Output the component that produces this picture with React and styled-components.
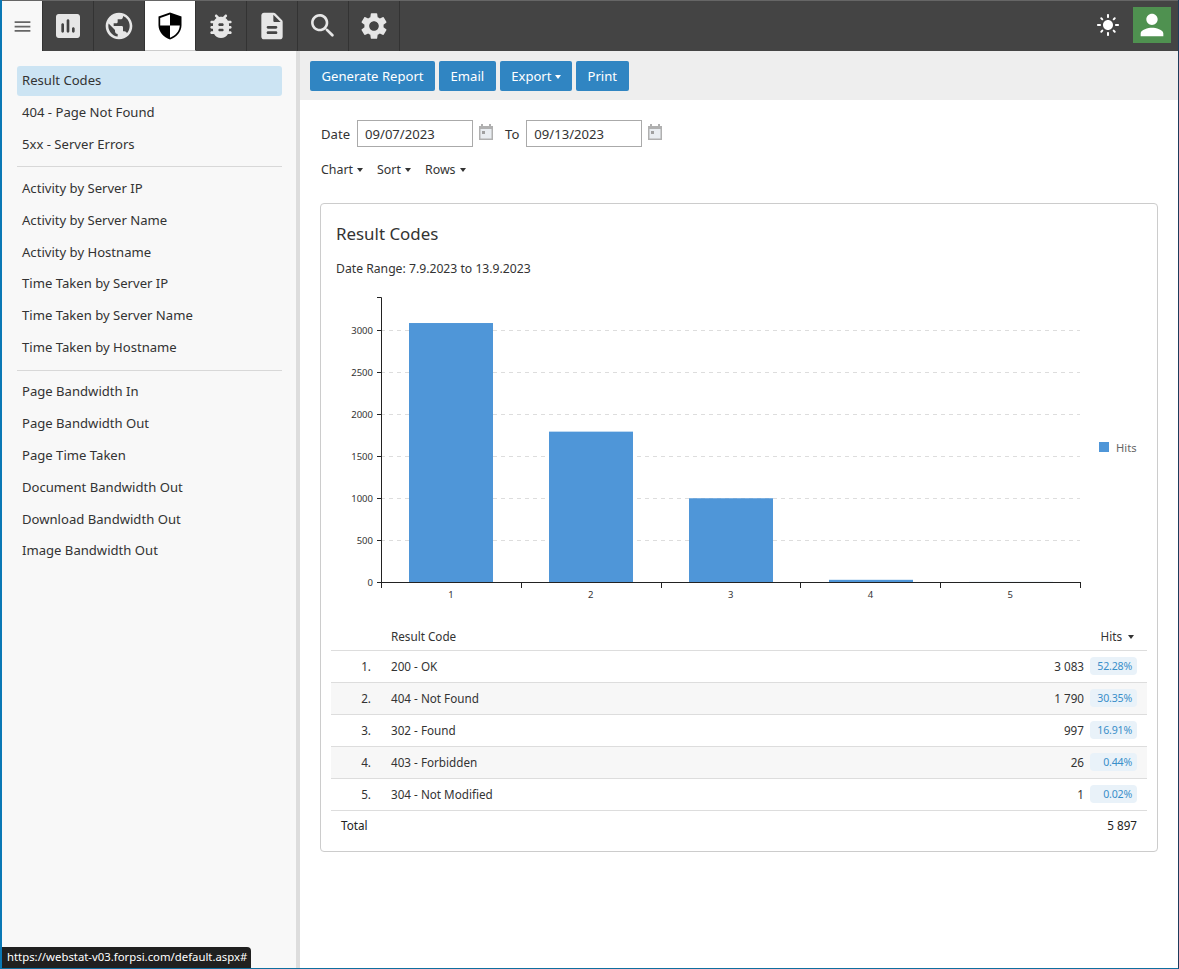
import React from "react";
import styled, { createGlobalStyle } from "styled-components";
import { MdMenu, MdPublic, MdSettings, MdPerson, MdLightMode } from "react-icons/md";

const GlobalStyle = createGlobalStyle`
  html, body {
    margin: 0;
    padding: 0;
    height: 100%;
    background: #fff;
    font-family: "Noto Sans", "Open Sans", "Liberation Sans", sans-serif;
    font-size: 13.1px;
    color: #333;
  }
  * { box-sizing: border-box; }
`;

const Page = styled.div`
  position: relative;
  width: 1179px;
  height: 969px;
  display: flex;
  flex-direction: column;
  overflow: hidden;
  border-left: 2px solid #0a78b5;
  border-right: 1px solid #1d3b5c;
  border-bottom: 1px solid #0f6f9f;
`;

const TopBar = styled.header`
  flex: none;
  height: 51px;
  display: flex;
  align-items: stretch;
  background: #444;
  border-top: 1px solid #666;
`;

const MenuTab = styled.div`
  width: 41px;
  background: #f8f8f8;
  color: #666;
  display: flex;
  align-items: center;
  justify-content: center;
  border-right: 1px solid #333;
`;

const Tab = styled.div`
  width: 51px;
  display: flex;
  align-items: center;
  justify-content: center;
  color: #e6e6e6;
  background: ${(p) => (p.$active ? "#fff" : "#444")};
  border-right: 1px solid #333;
  border-bottom: ${(p) => (p.$active ? "1px solid #ccc" : "none")};
`;

const TopRight = styled.div`
  margin-left: auto;
  display: flex;
  align-items: center;
  gap: 13px;
  padding-right: 7px;
  padding-bottom: 2px;
  color: #fff;
`;

const Avatar = styled.div`
  width: 38px;
  height: 36px;
  background: #4f9150;
  display: flex;
  align-items: center;
  justify-content: center;
  color: #fff;
`;

const Body = styled.div`
  flex: 1;
  display: flex;
  min-height: 0;
`;

const Sidebar = styled.nav`
  flex: none;
  width: 298px;
  background: #f8f8f8;
  border-right: 4px solid #ddd;
  padding: 15px 14px 0 15px;
`;

const NavItem = styled.div`
  height: 29.8px;
  margin-bottom: 2px;
  padding: 0 0 1.5px 5px;
  display: flex;
  align-items: center;
  border-radius: 3px;
  white-space: nowrap;
  background: ${(p) => (p.$active ? "#cce4f3" : "transparent")};
`;

const NavDivider = styled.hr`
  border: 0;
  border-top: 1px solid #d8d8d8;
  margin: 7px 0 6.5px;
`;

const Main = styled.main`
  flex: 1;
  min-width: 0;
  background: #fff;
`;

const Toolbar = styled.div`
  height: 49px;
  background: #eee;
  padding: 10px;
  display: flex;
  gap: 4px;
`;

const Button = styled.button`
  height: 30px;
  padding: 0 11.5px;
  border: 0;
  border-radius: 2px;
  background: #3085c2;
  color: #fff;
  font: inherit;
  white-space: nowrap;
`;

const Caret = styled.span`
  display: inline-block;
  margin-left: ${(p) => p.$gap || 4}px;
  vertical-align: 2px;
  border-top: 4px solid currentColor;
  border-left: 3.5px solid transparent;
  border-right: 3.5px solid transparent;
`;

const Content = styled.div`
  padding: 20px 20px 0;
`;

const DateRow = styled.div`
  display: flex;
  align-items: center;
  height: 27px;
  padding-left: 1px;
`;

const DateLabel = styled.label`
  margin-right: 7px;
`;

const ToLabel = styled(DateLabel)`
  margin-left: 12px;
`;

const DateInput = styled.input`
  width: 116px;
  height: 27px;
  padding: 0 7px;
  border: 1px solid #aaa;
  border-radius: 0;
  font: inherit;
  color: #333;
  outline: 0;
`;

const CalendarBtn = styled.span`
  display: flex;
  margin: -3px 0 0 6px;
  color: #aaa;
`;

const FilterRow = styled.div`
  display: flex;
  gap: 14px;
  margin-top: 12px;
  height: 20px;
  align-items: center;
  font-size: 12.4px;
  padding-left: 1px;
`;

const Card = styled.section`
  margin-top: 24px;
  width: 838px;
  height: 649px;
  border: 1px solid #ccc;
  border-radius: 4px;
  padding: 0 10px;
`;

const CardTitle = styled.h2`
  margin: 0;
  padding: 18px 0 0 5px;
  height: 52px;
  font-size: 16.9px;
  font-weight: 400;
  line-height: 24px;
`;

const RangeNote = styled.div`
  padding-left: 5px;
  height: 34px;
  line-height: 26px;
  font-size: 12.2px;
`;

const ChartSvg = styled.svg`
  display: block;
  width: 816px;
  height: 330px;
  font-family: "Noto Sans", "Open Sans", sans-serif;
`;

const Table = styled.table`
  width: 816px;
  border-collapse: collapse;
  table-layout: fixed;
  font-size: 11.7px;
`;

const Th = styled.th`
  height: 30px;
  padding: 2px ${(p) => p.$pr || 10}px 0 0;
  font-weight: 400;
  text-align: ${(p) => p.$align || "left"};
`;

const Row = styled.tr`
  height: 32px;
  background: ${(p) => (p.$shade ? "#f7f7f7" : "transparent")};
  border-top: 1px solid #ddd;
`;

const TotalRow = styled(Row)`
  color: #222;
  height: 30px;
`;

const Td = styled.td`
  padding: 0 ${(p) => p.$pr || 0}px 0 ${(p) => p.$pl || 0}px;
  text-align: ${(p) => p.$align || "left"};
  white-space: nowrap;
`;

const Hits = styled.div`
  display: flex;
  justify-content: flex-end;
  align-items: center;
  gap: 6px;
  padding-right: 10px;
`;

const Pct = styled.span`
  width: 47px;
  height: 18px;
  line-height: 18px;
  padding-right: 5px;
  text-align: right;
  border-radius: 4px;
  background: #e9f2f9;
  color: #3a8fc9;
  font-size: 10.6px;
  letter-spacing: -0.2px;
`;

const StatusTip = styled.div`
  position: absolute;
  left: 0;
  bottom: 0;
  width: 249px;
  height: 21px;
  padding: 0 5px;
  line-height: 20px;
  background: #202020;
  color: #fff;
  font-size: 11.35px;
  white-space: nowrap;
  border-top-right-radius: 4px;
`;

const groups = [
  ["Result Codes", "404 - Page Not Found", "5xx - Server Errors"],
  [
    "Activity by Server IP",
    "Activity by Server Name",
    "Activity by Hostname",
    "Time Taken by Server IP",
    "Time Taken by Server Name",
    "Time Taken by Hostname",
  ],
  [
    "Page Bandwidth In",
    "Page Bandwidth Out",
    "Page Time Taken",
    "Document Bandwidth Out",
    "Download Bandwidth Out",
    "Image Bandwidth Out",
  ],
];

const rows = [
  ["200 - OK", "3 083", "52.28%", 3083],
  ["404 - Not Found", "1 790", "30.35%", 1790],
  ["302 - Found", "997", "16.91%", 997],
  ["403 - Forbidden", "26", "0.44%", 26],
  ["304 - Not Modified", "1", "0.02%", 1],
];

const TabIcon = ({ d, size = 32 }) => (
  <svg width={size} height={size} viewBox="0 0 24 24" fill="currentColor">
    <path d={d} />
  </svg>
);

const ICONS = {
  report:
    "M19 3H5c-1.1 0-2 .9-2 2v14c0 1.1.9 2 2 2h14c1.1 0 2-.9 2-2V5c0-1.1-.9-2-2-2zM8 17c-.55 0-1-.45-1-1v-5c0-.55.45-1 1-1s1 .45 1 1v5c0 .55-.45 1-1 1zm4 0c-.55 0-1-.45-1-1V8c0-.55.45-1 1-1s1 .45 1 1v8c0 .55-.45 1-1 1zm4 0c-.55 0-1-.45-1-1v-2c0-.55.45-1 1-1s1 .45 1 1v2c0 .55-.45 1-1 1z",
  bug:
    "M19 8h-1.81c-.45-.78-1.07-1.45-1.82-1.96l.93-.93c.39-.39.39-1.02 0-1.41-.39-.39-1.02-.39-1.41 0l-1.47 1.47C12.96 5.06 12.49 5 12 5s-.96.06-1.41.17L9.11 3.7c-.39-.39-1.02-.39-1.41 0-.39.39-.39 1.02 0 1.41l.92.93C7.88 6.55 7.26 7.22 6.81 8H5c-.55 0-1 .45-1 1s.45 1 1 1h1.09c-.05.33-.09.66-.09 1v1H5c-.55 0-1 .45-1 1s.45 1 1 1h1v1c0 .34.04.67.09 1H5c-.55 0-1 .45-1 1s.45 1 1 1h1.81c1.04 1.79 2.97 3 5.19 3s4.15-1.21 5.19-3H19c.55 0 1-.45 1-1s-.45-1-1-1h-1.09c.05-.33.09-.66.09-1v-1h1c.55 0 1-.45 1-1s-.45-1-1-1h-1v-1c0-.34-.04-.67-.09-1H19c.55 0 1-.45 1-1s-.45-1-1-1zm-6 8h-2c-.55 0-1-.45-1-1s.45-1 1-1h2c.55 0 1 .45 1 1s-.45 1-1 1zm0-4h-2c-.55 0-1-.45-1-1s.45-1 1-1h2c.55 0 1 .45 1 1s-.45 1-1 1z",
  doc:
    "M14.59 2.59c-.38-.38-.89-.59-1.42-.59H6c-1.1 0-2 .9-2 2v16c0 1.1.89 2 1.99 2H18c1.1 0 2-.9 2-2V8.83c0-.53-.21-1.04-.59-1.41l-4.82-4.83zM15 18H9c-.55 0-1-.45-1-1s.45-1 1-1h6c.55 0 1 .45 1 1s-.45 1-1 1zm0-4H9c-.55 0-1-.45-1-1s.45-1 1-1h6c.55 0 1 .45 1 1s-.45 1-1 1zm-2-6V3.5L18.5 9H14c-.55 0-1-.45-1-1z",
  search:
    "M15.5 14h-.79l-.28-.27c1.2-1.4 1.82-3.31 1.48-5.34-.47-2.78-2.79-5-5.59-5.34-4.2-.53-7.75 3.01-7.22 7.22.34 2.8 2.56 5.12 5.34 5.59 2.03.34 3.94-.28 5.34-1.48l.27.28v.79l4.25 4.25c.41.41 1.08.41 1.49 0 .41-.41.41-1.08 0-1.49L15.5 14zm-6 0C7.01 14 5 11.99 5 9.5S7.01 5 9.5 5 14 7.01 14 9.5 11.99 14 9.5 14z",
};

const ShieldIcon = () => (
  <svg width="28" height="30" viewBox="0 0 28 30">
    <path d="M14 1.5 L25.5 5.5 V14 C25.5 21 20.5 26 14 28.5 C7.5 26 2.5 21 2.5 14 V5.5 Z" fill="#000" />
    <path d="M14 3.6 L4.2 7 V14.5 H14 Z" fill="#fff" />
    <path d="M14 14.5 H23.8 C23.3 20.5 19.5 24.5 14 26.8 Z" fill="#fff" />
  </svg>
);

const CalendarIcon = () => (
  <svg width="14" height="16" viewBox="0 0 14 16">
    <path d="M0 2h2V0h2v2h6V0h2v2h2v14H0z" fill="#b0b0b0" />
    <rect x="1.5" y="5" width="11" height="9.5" fill="#e9edf1" />
    <rect x="3" y="7" width="3" height="3" fill="#a0a0a0" />
  </svg>
);

// chart uses page coordinates, viewBox starts where the svg sits on the page
const BASE = 582;
const AXIS_X = 381;
const SLOT = 139.8;
const yOf = (v) => Math.round(BASE - v * 0.084);

const BarChart = () => (
  <ChartSvg viewBox="331 290 816 330">
    {[500, 1000, 1500, 2000, 2500, 3000].map((v) => (
      <line key={v} x1={AXIS_X} x2="1080" y1={yOf(v) + 0.5} y2={yOf(v) + 0.5} stroke="#ddd" strokeDasharray="4 4" />
    ))}
    {rows.map((r, i) => (
      <rect key={i} x={AXIS_X + 28 + i * 140} y={BASE - r[3] * 0.084} width="84" height={r[3] * 0.084} fill="#4f96d8" />
    ))}
    <path d="M377 297.5H381.5V582.5H1080.5" fill="none" stroke="#222" />
    {[0, 500, 1000, 1500, 2000, 2500, 3000].map((v) => (
      <g key={v}>
        <line x1="377" x2="381" y1={yOf(v) + 0.5} y2={yOf(v) + 0.5} stroke="#222" />
        <text x="373" y={yOf(v) + 3.5} textAnchor="end" fontSize="9.5" fill="#333">
          {v}
        </text>
      </g>
    ))}
    {[0, 1, 2, 3, 4, 5].map((i) => (
      <line key={i} x1={Math.round(AXIS_X + i * SLOT) + 0.5} x2={Math.round(AXIS_X + i * SLOT) + 0.5} y1="582" y2="588" stroke="#222" />
    ))}
    {rows.map((r, i) => (
      <text key={i} x={AXIS_X + 70 + i * SLOT} y="598" textAnchor="middle" fontSize="9.5" fill="#333">
        {i + 1}
      </text>
    ))}
    <rect x="1099" y="442" width="10" height="10" fill="#4f96d8" />
    <text x="1116" y="451.5" fontSize="11.2" fill="#666">
      Hits
    </text>
  </ChartSvg>
);

export default function App() {
  return (
    <>
      <GlobalStyle />
      <Page>
        <TopBar>
          <MenuTab>
            <MdMenu size={21} />
          </MenuTab>
          <Tab><TabIcon d={ICONS.report} /></Tab>
          <Tab><MdPublic size={32} /></Tab>
          <Tab $active><ShieldIcon /></Tab>
          <Tab><TabIcon d={ICONS.bug} /></Tab>
          <Tab><TabIcon d={ICONS.doc} /></Tab>
          <Tab><TabIcon d={ICONS.search} /></Tab>
          <Tab><MdSettings size={32} /></Tab>
          <TopRight>
            <MdLightMode size={24} />
            <Avatar>
              <MdPerson size={34} />
            </Avatar>
          </TopRight>
        </TopBar>
        <Body>
          <Sidebar>
            {groups.map((g, gi) => (
              <React.Fragment key={gi}>
                {gi > 0 && <NavDivider />}
                {g.map((label) => (
                  <NavItem key={label} $active={label === "Result Codes"}>
                    {label}
                  </NavItem>
                ))}
              </React.Fragment>
            ))}
          </Sidebar>
          <Main>
            <Toolbar>
              <Button>Generate Report</Button>
              <Button>Email</Button>
              <Button>
                Export<Caret $gap={3} />
              </Button>
              <Button>Print</Button>
            </Toolbar>
            <Content>
              <DateRow>
                <DateLabel>Date</DateLabel>
                <DateInput defaultValue="09/07/2023" />
                <CalendarBtn><CalendarIcon /></CalendarBtn>
                <ToLabel>To</ToLabel>
                <DateInput defaultValue="09/13/2023" />
                <CalendarBtn><CalendarIcon /></CalendarBtn>
              </DateRow>
              <FilterRow>
                <span>Chart<Caret /></span>
                <span>Sort<Caret /></span>
                <span>Rows<Caret /></span>
              </FilterRow>
              <Card>
                <CardTitle>Result Codes</CardTitle>
                <RangeNote>Date Range: 7.9.2023 to 13.9.2023</RangeNote>
                <BarChart />
                <Table>
                  <colgroup>
                    <col style={{ width: 60 }} />
                    <col />
                    <col style={{ width: 200 }} />
                  </colgroup>
                  <thead>
                    <tr>
                      <Th />
                      <Th>Result Code</Th>
                      <Th $align="right" $pr={13}>Hits<Caret $gap={6} /></Th>
                    </tr>
                  </thead>
                  <tbody>
                    {rows.map((r, i) => (
                      <Row key={r[0]} $shade={i % 2 === 1}>
                        <Td $align="right" $pr={20}>{i + 1}.</Td>
                        <Td>{r[0]}</Td>
                        <Td>
                          <Hits>
                            {r[1]}
                            <Pct>{r[2]}</Pct>
                          </Hits>
                        </Td>
                      </Row>
                    ))}
                    <TotalRow>
                      <Td $pl={10}>Total</Td>
                      <Td />
                      <Td $align="right" $pr={10}>5 897</Td>
                    </TotalRow>
                  </tbody>
                </Table>
              </Card>
            </Content>
          </Main>
        </Body>
        <StatusTip>https://webstat-v03.forpsi.com/default.aspx#</StatusTip>
      </Page>
    </>
  );
}
